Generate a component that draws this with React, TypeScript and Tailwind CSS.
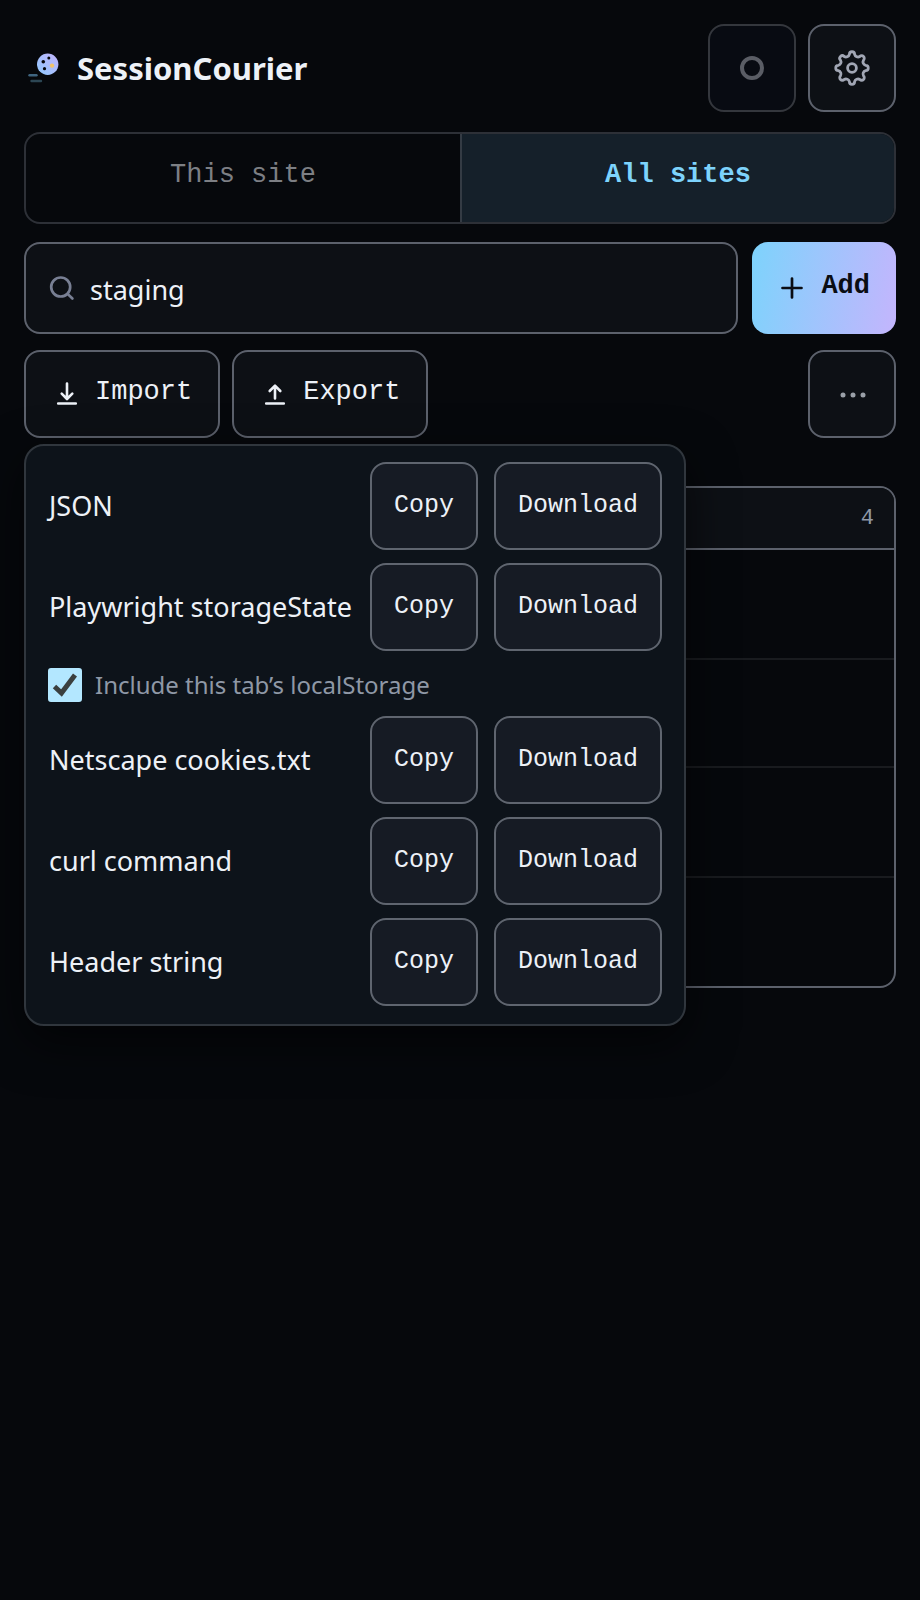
import { useState } from 'react';

const formats = ['JSON', 'Playwright storageState', 'Netscape cookies.txt', 'curl command', 'Header string'];

const boxButton =
  'h-[88px] rounded-2xl border-2 border-[#5c616c] bg-[#0d1015] flex items-center justify-center';

function Logo() {
  return (
    <svg width="36" height="36" viewBox="-2 0 36 36" aria-hidden="true">
      <defs>
        <linearGradient id="cookie" x1="0" y1="1" x2="1" y2="0">
          <stop offset="0" stopColor="#8fc9ff" />
          <stop offset="1" stopColor="#c2b3fc" />
        </linearGradient>
      </defs>
      <circle cx="21.7" cy="14.3" r="10.7" fill="url(#cookie)" />
      <circle cx="17.3" cy="11.7" r="1.8" fill="#07080c" />
      <circle cx="22.8" cy="8" r="1.5" fill="#07080c" />
      <circle cx="18.5" cy="18.7" r="1.6" fill="#07080c" />
      <circle cx="26" cy="15.6" r="2.2" fill="#f2c36b" />
      <path d="M3.5 25.3h7" stroke="#3f6580" strokeWidth="2.4" strokeLinecap="round" />
      <path d="M5.5 31h9.5" stroke="#2c4654" strokeWidth="2.4" strokeLinecap="round" />
    </svg>
  );
}

// Eight round teeth joined by shallow round valleys
function gearPath() {
  const point = (degrees: number) => {
    const a = (degrees * Math.PI) / 180;
    return `${(20 + 13.9 * Math.sin(a)).toFixed(2)} ${(20 - 13.9 * Math.cos(a)).toFixed(2)}`;
  };
  let d = `M${point(-10.8)}`;
  for (let tooth = 0; tooth < 8; tooth++) {
    d += `A2.6 2.6 0 0 1 ${point(tooth * 45 + 10.8)}`;
    d += `A3.5 3.5 0 0 0 ${point(tooth * 45 + 34.2)}`;
  }
  return d + 'Z';
}

function GearIcon() {
  return (
    <svg width="40" height="40" viewBox="0 0 40 40" fill="none" stroke="currentColor" strokeWidth="2.8" strokeLinejoin="round">
      <path d={gearPath()} />
      <circle cx="20" cy="20" r="4.4" />
    </svg>
  );
}

function Header() {
  return (
    <header className="flex items-center gap-3">
      <div className="flex flex-1 items-center gap-[17px]">
        <Logo />
        <h1 className="text-[31px] leading-10 font-bold">SessionCourier</h1>
      </div>
      <button
        type="button"
        aria-label="Status"
        disabled
        className="flex h-[88px] w-[88px] items-center justify-center rounded-2xl border-2 border-[#34373d] bg-[#080b12]"
      >
        <svg width="24" height="24" viewBox="0 0 24 24" fill="none" stroke="#5a5d65" strokeWidth="4">
          <circle cx="12" cy="12" r="10" />
        </svg>
      </button>
      <button type="button" aria-label="Settings" className={`${boxButton} w-[88px] text-[#a1a6b4]`}>
        <GearIcon />
      </button>
    </header>
  );
}

function ExportMenu() {
  const [includeStorage, setIncludeStorage] = useState(true);

  return (
    <div className="absolute top-full left-0 z-10 mt-[6px] flex flex-col gap-[13px] rounded-[20px] border-2 border-[#30363d] bg-[#0d131a] px-[22px] pt-4 pb-[18px] font-['Noto_Sans',sans-serif] shadow-[0_16px_48px_rgba(0,0,0,0.6)]">
      {formats.map((name) => (
        <div key={name} className="contents">
          <div className="flex items-center gap-4">
            <span className="flex-1 pr-[2px] pl-px text-[27px] leading-9 whitespace-nowrap">{name}</span>
            {['Copy', 'Download'].map((action) => (
              <button
                key={action}
                type="button"
                aria-label={`${action} ${name}`}
                className="h-[88px] rounded-2xl border-2 border-[#5f656f] bg-[#161b24] px-[22px] font-['Liberation_Mono',monospace] text-[25px]"
              >
                {action}
              </button>
            ))}
          </div>
          {name === 'Playwright storageState' && (
            <label className="flex h-[39px] items-center gap-[13px] pt-[2px] text-[24px] leading-8 text-[#8f98a6]">
              <span className="relative flex">
                <input
                  type="checkbox"
                  checked={includeStorage}
                  onChange={(e) => setIncludeStorage(e.target.checked)}
                  className="h-[34px] w-[34px] appearance-none rounded-[3px] border-2 border-[#b3e7ff] checked:bg-[#b3e7ff]"
                />
                {includeStorage && (
                  <svg className="pointer-events-none absolute inset-0" width="34" height="34" viewBox="0 0 34 34" fill="none">
                    <path d="M6.5 18.5l7 6.5L27 7" stroke="#3a3f3f" strokeWidth="5" />
                  </svg>
                )}
              </span>
              Include this tab’s localStorage
            </label>
          )}
        </div>
      ))}
    </div>
  );
}

export default function App() {
  const [tab, setTab] = useState('all');
  const [query, setQuery] = useState('staging');
  const [exportOpen, setExportOpen] = useState(true);

  const tabClass = (active: boolean) =>
    `pb-[6px] text-[27px] ${active ? 'bg-[#15202a] font-bold text-[#7dd3fc]' : 'text-[#7d7f84]'}`;

  return (
    <div className="min-h-screen bg-[#06080c] p-6 font-['Noto_Sans',sans-serif] text-[#edf1f7]">
      <Header />

      <div
        role="tablist"
        className="mt-5 grid h-[92px] grid-cols-2 overflow-hidden rounded-2xl border-2 border-[#2d3037] font-['Liberation_Mono',monospace]"
      >
        <button type="button" role="tab" aria-selected={tab === 'site'} onClick={() => setTab('site')} className={tabClass(tab === 'site')}>
          This site
        </button>
        <button
          type="button"
          role="tab"
          aria-selected={tab === 'all'}
          onClick={() => setTab('all')}
          className={`${tabClass(tab === 'all')} border-l-2 border-[#343b44]`}
        >
          All sites
        </button>
      </div>

      <div className="mt-[18px] flex gap-[14px]">
        <label className="flex h-[92px] min-w-0 flex-1 items-center gap-[14px] rounded-2xl border-2 border-[#5c616c] bg-[#0d1015] px-[22px]">
          <svg width="28" height="28" viewBox="0 0 28 28" fill="none" stroke="#787f93" strokeWidth="2.7" strokeLinecap="round">
            <circle cx="12.7" cy="13" r="9.5" />
            <path d="M19.6 19.9l4.8 4.6" />
          </svg>
          <input
            type="text"
            aria-label="Search cookies"
            value={query}
            onChange={(e) => setQuery(e.target.value)}
            className="min-w-0 flex-1 bg-transparent pt-1 text-[27px] outline-none"
          />
        </label>
        <button
          type="button"
          className="flex items-center gap-[15px] rounded-2xl bg-linear-[100deg] from-[#7dd3fc] to-[#c4b5fd] px-[26px] font-['Liberation_Mono',monospace] text-[27px] font-bold text-[#0a0d14]"
        >
          <svg width="28" height="28" viewBox="0 0 28 28" stroke="currentColor" strokeWidth="2.7" strokeLinecap="round">
            <path d="M14 4.5v19M4.5 14h19" />
          </svg>
          <span className="pb-1">Add</span>
        </button>
      </div>

      <div className="relative mt-4 flex gap-3 font-['Liberation_Mono',monospace] text-[27px]">
        <button type="button" className={`${boxButton} gap-[14px] pr-[26px] pl-[27px]`}>
          <svg width="28" height="28" viewBox="0 0 28 28" fill="none" stroke="currentColor" strokeWidth="2.6" strokeLinecap="round" strokeLinejoin="round">
            <path d="M14 3.5v15M8.7 13.7l5.3 5.3l5.3-5.3M5.2 23.5h17.6" />
          </svg>
          <span className="pb-1">Import</span>
        </button>
        <button
          type="button"
          aria-expanded={exportOpen}
          onClick={() => setExportOpen(!exportOpen)}
          className={`${boxButton} gap-[14px] pr-[26px] pl-[27px]`}
        >
          <svg width="28" height="28" viewBox="0 0 28 28" fill="none" stroke="currentColor" strokeWidth="2.6" strokeLinecap="round" strokeLinejoin="round">
            <path d="M14 18.5V5.7M8.7 11l5.3-5.3l5.3 5.3M5.2 23.5h17.6" />
          </svg>
          <span className="pb-1">Export</span>
        </button>
        <button type="button" aria-label="More actions" className={`${boxButton} ml-auto w-[88px] text-[#9aa0a8]`}>
          <svg width="30" height="30" viewBox="0 0 30 30" fill="currentColor">
            <circle cx="6" cy="16" r="2.5" />
            <circle cx="16" cy="16" r="2.5" />
            <circle cx="26" cy="16" r="2.5" />
          </svg>
        </button>
        {exportOpen && <ExportMenu />}
      </div>

      <section className="mt-12 overflow-hidden rounded-2xl border-2 border-[#5c616c]">
        <div className="flex h-[62px] items-center justify-end border-b-2 border-[#5c616c] bg-[#0d1015] px-5 font-['Liberation_Mono',monospace] text-[22px] text-[#8f98a6]">
          4
        </div>
        <ul className="divide-y-2 divide-[#191b1f]">
          <li className="h-[110px]" />
          <li className="h-[108px]" />
          <li className="h-[110px]" />
          <li className="h-[108px]" />
        </ul>
      </section>
    </div>
  );
}
